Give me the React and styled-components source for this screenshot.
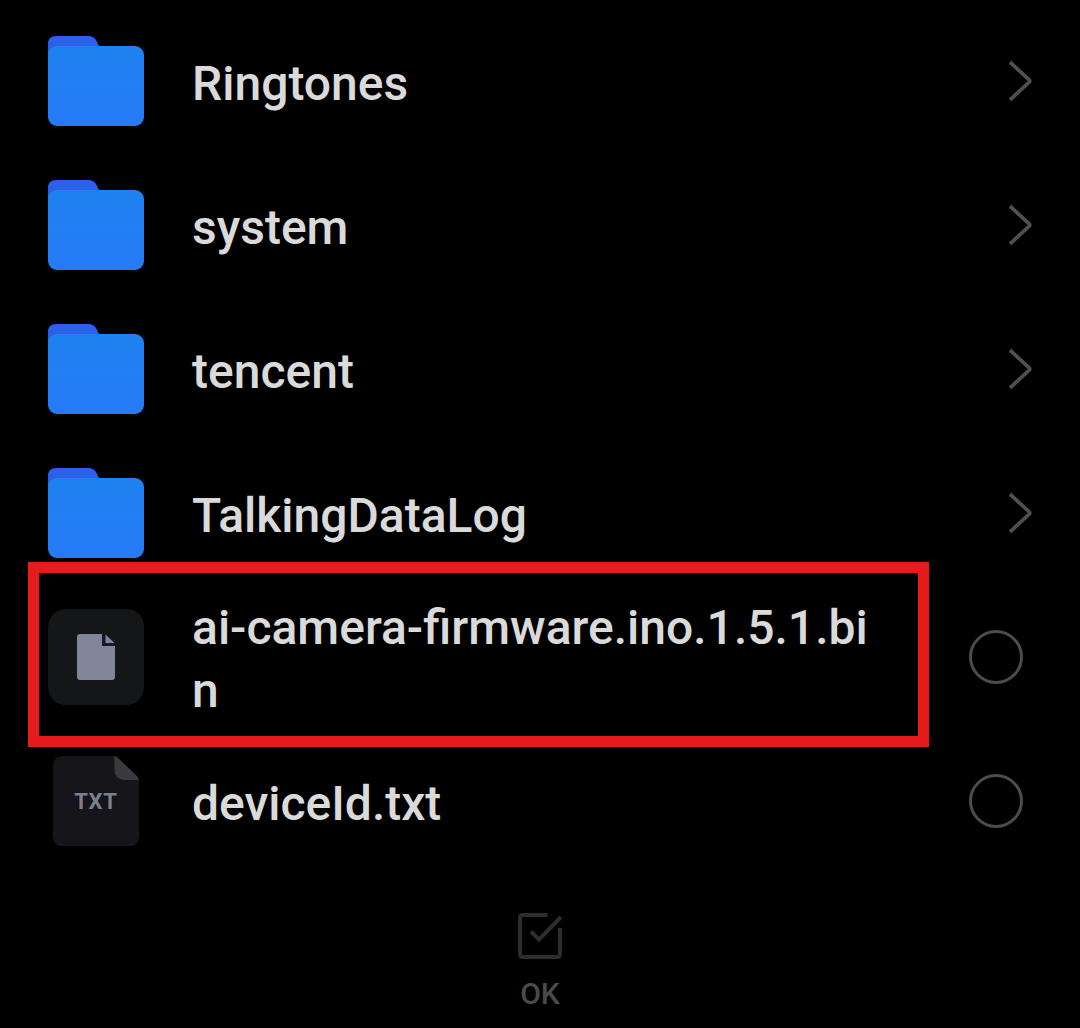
import React from "react";
import styled, { createGlobalStyle } from "styled-components";

const GlobalStyle = createGlobalStyle`
  * { box-sizing: border-box; }
  body { margin: 0; background: #000; font-family: Roboto, sans-serif; }
`;

const Screen = styled.main`
  display: flex;
  flex-direction: column;
  height: 1028px;
  padding-top: 9px;
  background: #000;
  overflow: hidden;
`;

const FileList = styled.ul`
  margin: 0;
  padding: 0;
  list-style: none;
`;

const Row = styled.li`
  position: relative;
  display: flex;
  align-items: center;
  gap: 48px;
  height: 144px;
  padding: 0 ${(p) => (p.$selectable ? 57 : 48)}px 0 48px;
`;

const IconSlot = styled.div`
  display: flex;
  flex: none;
  justify-content: center;
  width: 96px;
`;

const NameArea = styled.div`
  flex: 1;
  min-width: 0;
`;

const Name = styled.div`
  width: 684px;
  padding-top: ${(p) => (p.$multiline ? 3 : 5)}px;
  color: #dadada;
  font-size: 48px;
  font-weight: 500;
  line-height: 63px;
  letter-spacing: 0;
  word-break: break-all;
`;

const Radio = styled.span`
  flex: none;
  width: 54px;
  height: 54px;
  border: 3px solid #4c4c4c;
  border-radius: 50%;
`;

const Highlight = styled.div`
  position: absolute;
  top: -23px;
  left: 28px;
  width: 901px;
  height: 185px;
  border: 11px solid #e61c1c;
`;

const TextFile = styled.div`
  display: grid;
  width: 86px;
  height: 90px;
  place-items: center;

  > * {
    grid-area: 1 / 1;
  }
`;

const TextFileLabel = styled.span`
  z-index: 1;
  padding-top: 1px;
  color: #7b7f8e;
  font-size: 22px;
  font-weight: 700;
  line-height: 26px;
  letter-spacing: 0.8px;
`;

const Footer = styled.footer`
  display: flex;
  flex-direction: column;
  align-items: center;
  padding-top: 38px;
`;

const FooterLabel = styled.span`
  margin-top: 17px;
  color: #4a4a4a;
  font-size: 30px;
  font-weight: 500;
  line-height: 36px;
`;

const FolderIcon = () => (
  <svg width="96" height="90" viewBox="0 0 96 90">
    <defs>
      <linearGradient id="folder" x1="0" y1="0" x2="0" y2="1">
        <stop offset="0" stopColor="#1e82f0" />
        <stop offset="1" stopColor="#267bf8" />
      </linearGradient>
    </defs>
    <path d="M0 24V8Q0 0 8 0H40Q46 0 48.500 5L52 12V24Z" fill="#2c60ea" />
    <rect y="10" width="96" height="80" rx="9" fill="url(#folder)" />
  </svg>
);

const BinaryIcon = () => (
  <svg width="96" height="96" viewBox="0 0 96 96">
    <path d="M18 0H78Q96 1 96 19V77Q95 95 78 96H18Q1 95 0 77V19Q1 1 18 0Z" fill="#151618" />
    <path d="M32 25H54V37H67V68Q67 71 64 71H32Q29 71 29 68V28Q29 25 32 25Z" fill="#80859a" />
    <path d="M54 25H57V34H67V37H54Z" fill="#15172a" />
    <path d="M57.500 25.500L66.500 34H57.500Z" fill="#80859a" />
  </svg>
);

const TxtIcon = () => (
  <TextFile>
    <svg width="86" height="90" viewBox="0 0 86 90">
      <path d="M10 0H62L86 23V80Q86 90 76 90H10Q0 90 0 80V10Q0 0 10 0Z" fill="#15151a" />
      <path d="M61.500 0Q63 0 64.500 1.500L84 20Q86 22 85 24H70Q61.500 22 61.500 14Z" fill="#39393e" />
    </svg>
    <TextFileLabel>TXT</TextFileLabel>
  </TextFile>
);

const Chevron = () => (
  <svg width="24" height="42" viewBox="0 0 24 42" fill="none" stroke="#505050" strokeWidth="3.6">
    <path d="M2 2.200L21.200 19.800Q22.500 21 21.200 22.200L2 39.800" />
  </svg>
);

const CheckIcon = () => (
  <svg width="46" height="48" viewBox="0 0 46 48" fill="none" stroke="#2e2e2e" strokeWidth="4">
    <path d="M30.500 4H6Q3 4 3 7V43Q3 46 6 46H40Q43 46 43 43V17" />
    <path d="M14 20.500L22 28.500L44 6.200" />
  </svg>
);

const icons = { folder: FolderIcon, binary: BinaryIcon, text: TxtIcon };

const files = [
  { name: "Ringtones", type: "folder" },
  { name: "system", type: "folder" },
  { name: "tencent", type: "folder" },
  { name: "TalkingDataLog", type: "folder" },
  { name: "ai-camera-firmware.ino.1.5.1.bin", type: "binary", highlighted: true },
  { name: "deviceId.txt", type: "text" },
];

function FileRow({ file }) {
  const Icon = icons[file.type];
  const selectable = file.type !== "folder";
  return (
    <Row $selectable={selectable}>
      <IconSlot><Icon /></IconSlot>
      <NameArea><Name $multiline={file.name.length > 28}>{file.name}</Name></NameArea>
      {selectable ? <Radio /> : <Chevron />}
      {file.highlighted && <Highlight />}
    </Row>
  );
}

export default function App() {
  return (
    <>
      <GlobalStyle />
      <Screen>
        <FileList>
          {files.map((file) => <FileRow key={file.name} file={file} />)}
        </FileList>
        <Footer>
          <CheckIcon />
          <FooterLabel>OK</FooterLabel>
        </Footer>
      </Screen>
    </>
  );
}
